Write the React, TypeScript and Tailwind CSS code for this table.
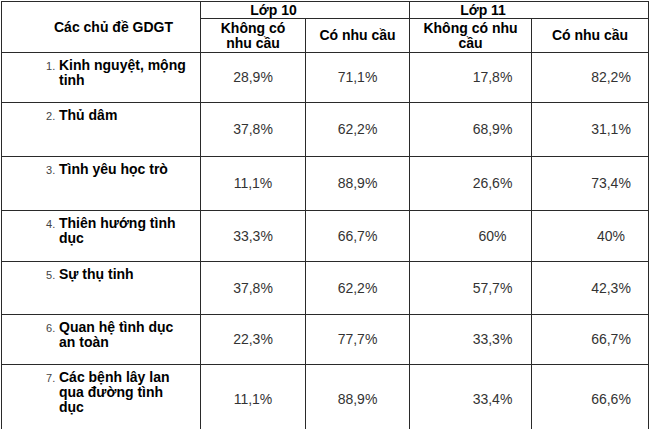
const rows = [
  { n: 1, topic: "Kinh nguyệt, mộng tinh", h: "h-[50px]", v: ["28,9%", "71,1%", "17,8%", "82,2%"] },
  { n: 2, topic: "Thủ dâm", h: "h-[54px]", v: ["37,8%", "62,2%", "68,9%", "31,1%"] },
  { n: 3, topic: "Tình yêu học trò", h: "h-[54px]", v: ["11,1%", "88,9%", "26,6%", "73,4%"] },
  { n: 4, topic: "Thiên hướng tình dục", h: "h-[51px]", v: ["33,3%", "66,7%", "60%", "40%"] },
  { n: 5, topic: "Sự thụ tinh", h: "h-[53px]", v: ["37,8%", "62,2%", "57,7%", "42,3%"] },
  { n: 6, topic: "Quan hệ tình dục an toàn", h: "h-[50px]", v: ["22,3%", "77,7%", "33,3%", "66,7%"] },
  { n: 7, topic: "Các bệnh lây lan qua đường tình dục", h: "h-[70px]", v: ["11,1%", "88,9%", "33,4%", "66,6%"] },
]

const cell = "border border-[#2a2a2a]"

export default function App() {
  return (
    <div className="w-[650px] h-[429px] overflow-hidden bg-white pl-px pt-px font-['Liberation_Sans',Arial,sans-serif] text-[14px] leading-[15px]">
      <table className="table-fixed border-collapse w-[647px]">
        <colgroup>
          <col className="w-[199px]" />
          <col className="w-[105px]" />
          <col className="w-[104px]" />
          <col className="w-[122px]" />
          <col className="w-[117px]" />
        </colgroup>
        <thead>
          <tr className="h-[17px]">
            <th rowSpan={2} className={`${cell} pl-[25px] text-center font-bold text-black`}>
              Các chủ đề GDGT
            </th>
            <th colSpan={2} className={`${cell} pr-[63px] text-center font-bold text-black`}>
              Lớp 10
            </th>
            <th colSpan={2} className={`${cell} pr-[92px] text-center font-bold text-black`}>
              Lớp 11
            </th>
          </tr>
          <tr className="h-[34px]">
            <th className={`${cell} px-2 text-center font-bold text-black leading-[15px]`}>
              Không có
              <br />
              nhu cầu
            </th>
            <th className={`${cell} text-center font-bold text-black`}>Có nhu cầu</th>
            <th className={`${cell} px-1 text-center font-bold text-black leading-[15px]`}>
              Không có nhu
              <br />
              cầu
            </th>
            <th className={`${cell} text-center font-bold text-black`}>Có nhu cầu</th>
          </tr>
        </thead>
        <tbody>
          {rows.map((r) => (
            <tr key={r.n} className={r.h}>
              <td className={`${cell} align-top pt-[5px] pl-[44px]`}>
                <div className="flex">
                  <span className="w-[13px] shrink-0 text-[11px] text-[#444] pt-px">{r.n}.</span>
                  <span className="w-[127px] font-bold text-black">{r.topic}</span>
                </div>
              </td>
              <td className={`${cell} text-center align-middle text-[#333]`}>{r.v[0]}</td>
              <td className={`${cell} text-center align-middle text-[#333]`}>{r.v[1]}</td>
              <td className={`${cell} pl-[44px] text-center align-middle text-[#333]`}>{r.v[2]}</td>
              <td className={`${cell} pl-[42px] text-center align-middle text-[#333]`}>{r.v[3]}</td>
            </tr>
          ))}
        </tbody>
      </table>
    </div>
  )
}
